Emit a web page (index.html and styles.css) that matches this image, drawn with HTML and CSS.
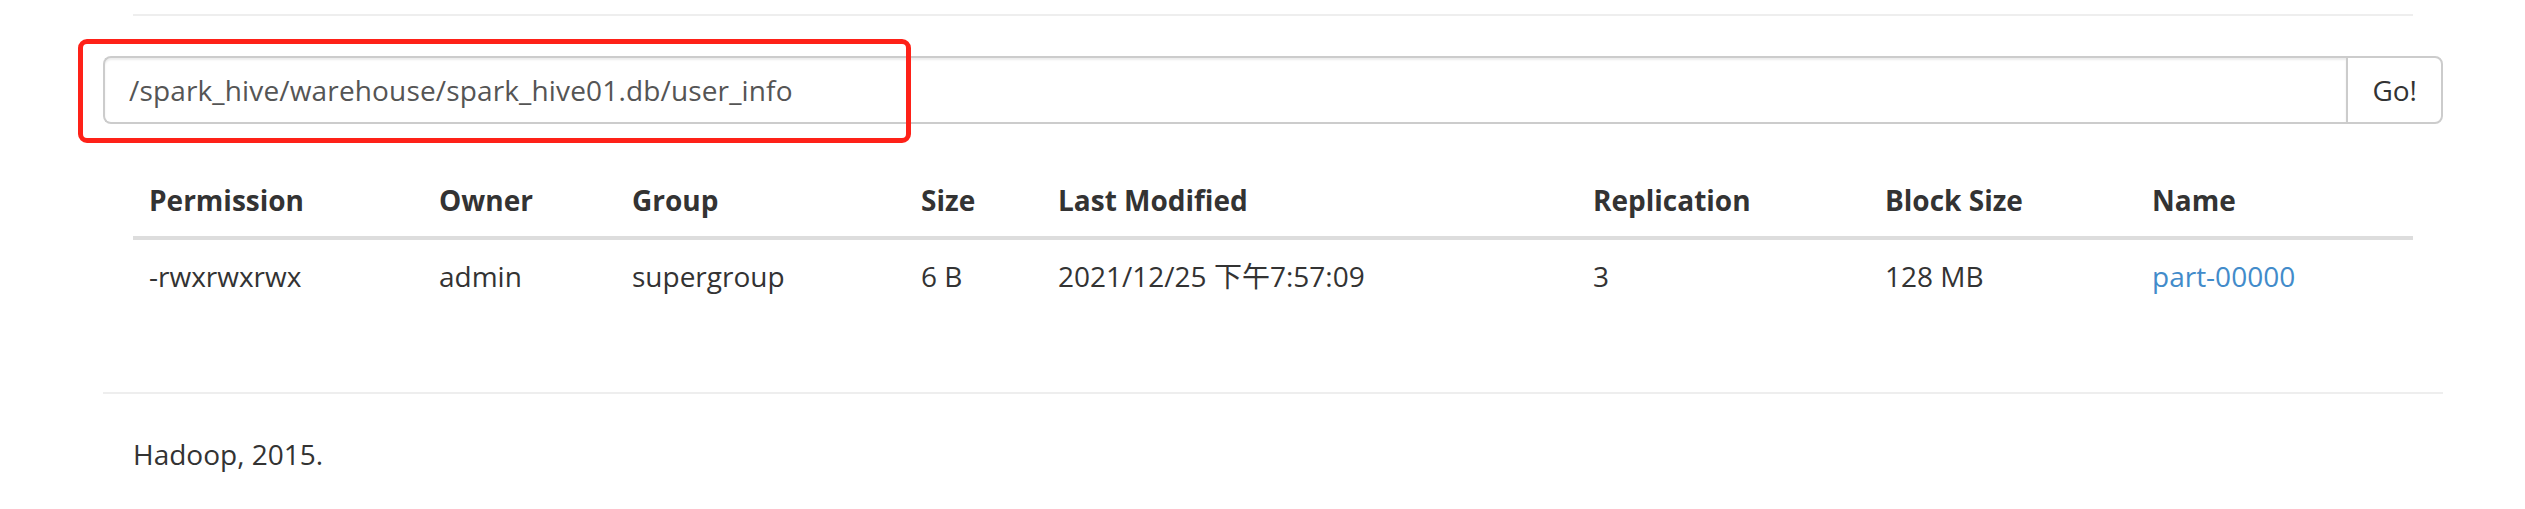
FILE: index.html
```html
<!DOCTYPE html>
<html>
<head>
<meta charset="utf-8">
<link rel="stylesheet" href="styles.css">
</head>
<body>
<div class="container">
  <div class="page-header"></div>
  <form class="input-group">
    <input class="form-control" type="text" value="/spark_hive/warehouse/spark_hive01.db/user_info">
    <button class="btn" type="button">Go!</button>
  </form>
  <div class="panel">
    <table class="table">
      <colgroup>
        <col class="c1"><col class="c2"><col class="c3"><col class="c4"><col class="c5"><col class="c6"><col class="c7"><col class="c8">
      </colgroup>
      <thead>
        <tr>
          <th>Permission</th><th>Owner</th><th>Group</th><th>Size</th><th>Last Modified</th><th>Replication</th><th>Block Size</th><th>Name</th>
        </tr>
      </thead>
      <tbody>
        <tr>
          <td>-rwxrwxrwx</td><td>admin</td><td>supergroup</td><td>6 B</td><td>2021/12/25 下午7:57:09</td><td>3</td><td>128 MB</td><td><a href="#">part-00000</a></td>
        </tr>
      </tbody>
    </table>
  </div>
  <hr class="rule">
  <div class="footer"><p>Hadoop, 2015.</p></div>
</div>
<div class="annotation"></div>
</body>
</html>
```

FILE: styles.css
```css
html, body {
  margin: 0;
  padding: 0;
  background: #fff;
}
body {
  font-family: "Open Sans", "Noto Sans CJK SC", sans-serif;
  font-size: 28px;
  line-height: 40px;
  color: #333;
  width: 2525px;
  height: 509px;
  overflow: hidden;
  position: relative;
}
.container {
  margin-left: 103px;
  width: 2340px;
}
.page-header {
  margin: 0 30px 40px;
  height: 14px;
  border-bottom: 2px solid #eee;
}
.input-group {
  display: flex;
  height: 68px;
  margin: 0 0 40px;
}
.form-control {
  flex: 1;
  box-sizing: border-box;
  height: 68px;
  margin: 0;
  padding: 12px 24px;
  border: 2px solid #ccc;
  border-right: 0;
  border-radius: 8px 0 0 8px;
  box-shadow: inset 0 2px 2px rgba(0, 0, 0, 0.075);
  font-family: inherit;
  font-size: 28px;
  line-height: 40px;
  letter-spacing: 0.15px;
  color: #555;
  outline: none;
}
.btn {
  box-sizing: border-box;
  height: 68px;
  margin: 0;
  padding: 12px 24px;
  border: 2px solid #ccc;
  border-radius: 0 8px 8px 0;
  background: #fff;
  font-family: inherit;
  font-size: 28px;
  line-height: 40px;
  color: #333;
}
.panel {
  display: flow-root;
  padding: 0 30px;
}
.table {
  width: 100%;
  table-layout: fixed;
  border-collapse: collapse;
  border-spacing: 0;
  margin-bottom: 40px;
}
.c1 { width: 290px; }
.c2 { width: 193px; }
.c3 { width: 289px; }
.c4 { width: 137px; }
.c5 { width: 535px; }
.c6 { width: 292px; }
.c7 { width: 267px; }
.c8 { width: 277px; }
.table th,
.table td {
  padding: 16px;
  text-align: left;
  vertical-align: bottom;
  white-space: nowrap;
}
.table th {
  font-weight: 700;
  border-bottom: 4px solid #ddd;
}
.table td {
  vertical-align: top;
}
.table a {
  color: #428bca;
  text-decoration: none;
}
.rule {
  margin: 40px 0;
  border: 0;
  border-top: 2px solid #eee;
  height: 0;
}
.footer {
  padding: 0 30px;
}
.footer p {
  margin: 0 0 20px;
}
.annotation {
  position: absolute;
  left: 78px;
  top: 39px;
  width: 833px;
  height: 104px;
  box-sizing: border-box;
  border: 5px solid #fe2118;
  border-radius: 9px;
}
```
